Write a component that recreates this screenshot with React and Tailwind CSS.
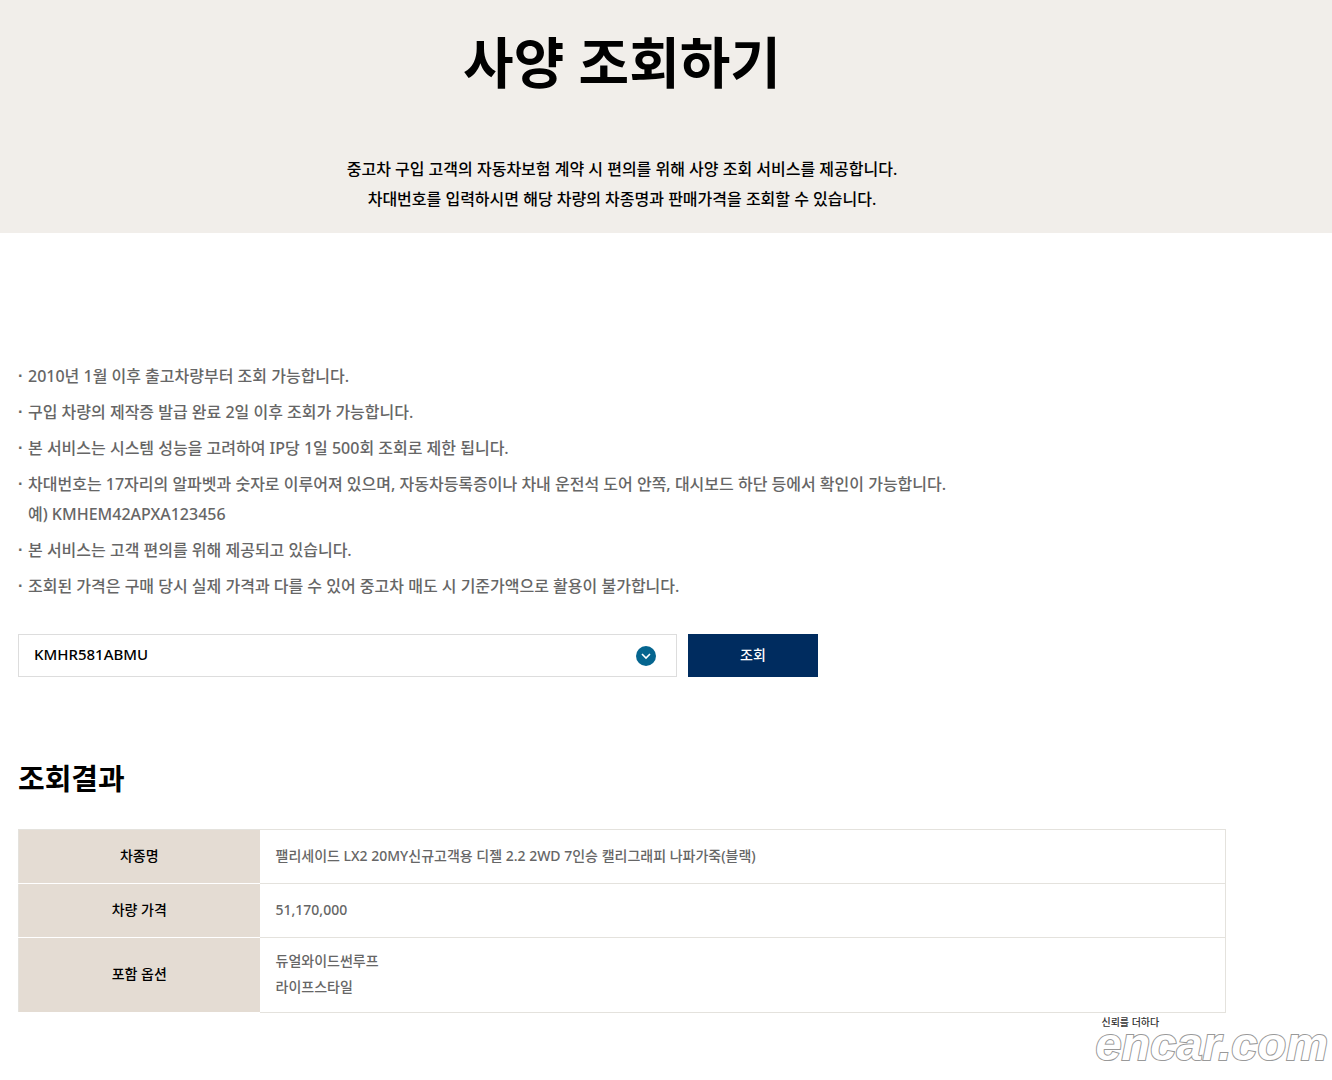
import { useState } from 'react';

const NOTES = [
  ['2010년 1월 이후 출고차량부터 조회 가능합니다.'],
  ['구입 차량의 제작증 발급 완료 2일 이후 조회가 가능합니다.'],
  ['본 서비스는 시스템 성능을 고려하여 IP당 1일 500회 조회로 제한 됩니다.'],
  [
    '차대번호는 17자리의 알파벳과 숫자로 이루어져 있으며, 자동차등록증이나 차내 운전석 도어 안쪽, 대시보드 하단 등에서 확인이 가능합니다.',
    '예) KMHEM42APXA123456',
  ],
  ['본 서비스는 고객 편의를 위해 제공되고 있습니다.'],
  ['조회된 가격은 구매 당시 실제 가격과 다를 수 있어 중고차 매도 시 기준가액으로 활용이 불가합니다.'],
];

const RESULT = [
  { label: '차종명', lines: ['팰리세이드 LX2 20MY신규고객용 디젤 2.2 2WD 7인승 캘리그래피 나파가죽(블랙)'] },
  { label: '차량 가격', lines: ['51,170,000'] },
  { label: '포함 옵션', lines: ['듀얼와이드썬루프', '라이프스타일'] },
];

function PageHeader() {
  return (
    <header className="bg-[#f1eeea] px-[18px] pt-6 pb-[19px]">
      <div className="max-w-[1208px] text-center text-black">
        <h1 className="text-[55px] leading-[76px] font-bold">사양 조회하기</h1>
        <p className="mt-[54px] text-base leading-[30px] font-medium">
          중고차 구입 고객의 자동차보험 계약 시 편의를 위해 사양 조회 서비스를 제공합니다.
          <br />
          차대번호를 입력하시면 해당 차량의 차종명과 판매가격을 조회할 수 있습니다.
        </p>
      </div>
    </header>
  );
}

function Notes() {
  return (
    <ul className="flex flex-col gap-1.5 text-base leading-[30px] font-medium text-[#666]">
      {NOTES.map((lines) => (
        <li key={lines[0]} className="flex">
          <span className="w-2.5 shrink-0 font-['Liberation_Sans',Arial,sans-serif] font-bold" aria-hidden="true">·</span>
          <div>
            {lines.map((line) => (
              <p key={line}>{line}</p>
            ))}
          </div>
        </li>
      ))}
    </ul>
  );
}

function SearchForm() {
  const [vin, setVin] = useState('KMHR581ABMU');

  return (
    <form className="mt-[33px] flex max-w-[800px] gap-[11px]" onSubmit={(e) => e.preventDefault()}>
      <div className="flex h-[43px] flex-1 items-center border border-[#ddd] bg-white pr-5 pl-[15px]">
        <input
          type="text"
          aria-label="차대번호"
          value={vin}
          onChange={(e) => setVin(e.target.value)}
          className="min-w-0 flex-1 pb-0.5 text-[15px] font-medium text-black outline-none"
        />
        <svg className="size-5" viewBox="0 0 20 20" fill="none" aria-hidden="true">
          <circle cx="10" cy="10" r="10" fill="#05658f" />
          <path d="M6 8 L10 12 L14 8" stroke="#fff" strokeWidth="1.6" />
        </svg>
      </div>
      <button type="submit" className="h-[43px] w-[130px] bg-[#002c5f] pb-0.5 text-sm font-medium text-white">
        조회
      </button>
    </form>
  );
}

function ResultTable() {
  return (
    <table className="mt-7 w-full border-collapse border border-[#e4e2dd] text-sm leading-[26px]">
      <tbody>
        {RESULT.map((row) => (
          <tr key={row.label} className="h-[54px] border-b border-[#e4e2dd]">
            <th
              scope="row"
              className="w-[241px] border-b border-white bg-[#e4dcd3] pb-0.5 font-medium text-black"
            >
              {row.label}
            </th>
            <td className="px-4 pt-2.5 pb-3 font-medium text-[#666]">
              {row.lines.map((line) => (
                <p key={line}>{line}</p>
              ))}
            </td>
          </tr>
        ))}
      </tbody>
    </table>
  );
}

function Watermark() {
  return (
    <footer className="mt-[3px] flex justify-end pr-1">
      <div>
        <p className="pl-1.5 text-[10px] leading-3 font-medium text-[#333]">신뢰를 더하다</p>
        <p className="font-['Liberation_Sans',Arial,sans-serif] text-[47px] leading-[32px] font-bold text-white italic [-webkit-text-stroke:2px_#999] [paint-order:stroke_fill]">
          encar.com
        </p>
      </div>
    </footer>
  );
}

export default function App() {
  return (
    <div className="min-h-screen bg-white font-['Noto_Sans','Noto_Sans_CJK_KR',sans-serif]">
      <PageHeader />
      <main className="px-[18px] pt-[128px]">
        <div className="max-w-[1208px]">
          <Notes />
          <SearchForm />
          <h2 className="mt-20 text-[29px] leading-[44px] font-bold text-black">조회결과</h2>
          <ResultTable />
        </div>
      </main>
      <Watermark />
    </div>
  );
}
